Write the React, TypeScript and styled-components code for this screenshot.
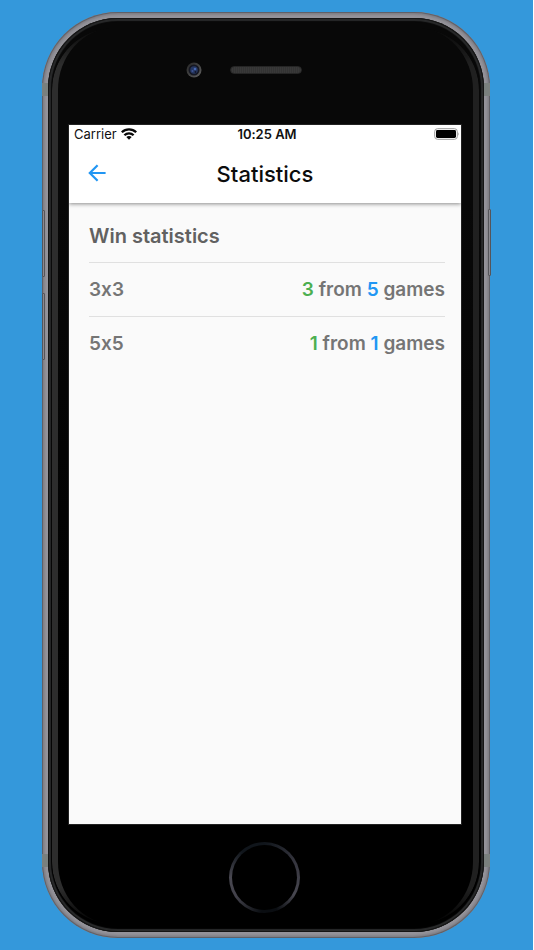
import React from "react";
import styled, { createGlobalStyle } from "styled-components";

const GlobalStyle = createGlobalStyle`
  *, *::before, *::after { box-sizing: border-box; }
  body {
    margin: 0;
    background: #3498db;
    font-family: Inter, "Liberation Sans", sans-serif;
    font-feature-settings: "calt" 0;
  }
`;

const Page = styled.main`
  display: flex;
  min-height: 100vh;
  padding: 12px 43px 12px 42px;
  border-right: 1px solid #ffffff;
  background: #3498db;
`;

const Phone = styled.div`
  position: relative;
  display: flex;
  flex: 1;
  padding: 6px;
  border-radius: 76px;
  background: #94939a;
  box-shadow:
    inset 0 0 1px 1px #5d5d63,
    inset 0 0 2px 3px #84838a;
`;

const Glass = styled.div`
  position: relative;
  display: flex;
  flex: 1;
  flex-direction: column;
  padding: 0 23px 0 21px;
  border-radius: 70px;
  background: linear-gradient(#080808, #080808 20%, #000000 75%);
  box-shadow:
    inset 0 0 0 1px #151515,
    inset 0 0 1px 3px #292a2b;

  &::before {
    content: "";
    position: absolute;
    inset: 10px 5px 8px 4px;
    border: 0 solid transparent;
    border-left: 6px solid #2d2d2d;
    border-right: 6px solid #202020;
    border-radius: 62px;
    mask-image: linear-gradient(transparent, #000000 36px, #000000 calc(100% - 36px), transparent);
    pointer-events: none;
  }
`;

const AntennaLine = styled.span<{ $side: "left" | "right"; $end: "top" | "bottom" }>`
  position: absolute;
  ${(p) => p.$side}: 0;
  ${(p) => p.$end}: 71px;
  width: 6px;
  height: 13px;
  background: #7a807e;
`;

const SideKey = styled.span<{ $side: "left" | "right"; $top: number }>`
  position: absolute;
  ${(p) => p.$side}: ${(p) => (p.$side === "left" ? 0 : -1)}px;
  top: ${(p) => p.$top}px;
  width: 3px;
  height: 67px;
  border: 1px solid #55555a;
  border-radius: 1px;
  background: #8b8a90;
`;

const TopBezel = styled.div`
  display: grid;
  grid-template-columns: 1fr auto 1fr;
  align-items: center;
  height: 107px;
  padding: 0 0 4px 2px;
`;

const Camera = styled.svg`
  justify-self: end;
  width: 16px;
  height: 16px;
  margin-right: 28px;
`;

const Speaker = styled.span`
  width: 72px;
  height: 8px;
  border: 1px solid #252525;
  border-radius: 4px;
  background: repeating-linear-gradient(90deg, #333333 0 1px, #393939 1px 2px);
`;

const Screen = styled.div`
  flex: 1;
  background: #fafafa;
  box-shadow: 0 0 0 1px #222222;
`;

const Header = styled.header`
  position: relative;
  background: #ffffff;
  box-shadow: 0 1px 4px rgba(0, 0, 0, 0.45);
  clip-path: inset(0 0 -8px 0);
`;

const StatusBar = styled.div`
  display: grid;
  grid-template-columns: 1fr auto 1fr;
  align-items: center;
  height: 18px;
  padding: 0 1px 0 5px;
  font-size: 13px;
  line-height: 16px;
  color: #111111;
`;

const Carrier = styled.span`
  display: flex;
  align-items: center;
  gap: 4px;
`;

const Clock = styled.time`
  font-weight: 600;
`;

const Battery = styled.svg`
  justify-self: end;
  width: 26px;
  height: 12px;
`;

const AppBar = styled.div`
  display: grid;
  grid-template-columns: 1fr auto 1fr;
  align-items: center;
  height: 60px;
  padding: 0 14px;
`;

const BackButton = styled.button`
  display: grid;
  place-items: center;
  width: 28px;
  height: 28px;
  padding: 0;
  border: 0;
  background: none;
  color: #2196f3;
  cursor: pointer;
`;

const Title = styled.h1`
  margin: 0;
  padding-top: 2px;
  font-size: 22px;
  font-weight: 500;
  line-height: 28px;
  color: #0c0c0c;
`;

const Stats = styled.table`
  width: calc(100% - 36px);
  margin: 5px 16px 0 20px;
  border-collapse: collapse;
  font-size: 19px;
  font-weight: 600;
  line-height: 24px;
  color: #757575;
`;

const Row = styled.tr`
  height: 54px;

  tbody > & {
    border-top: 1px solid #e0e0e0;
  }
`;

const Heading = styled.th`
  padding: 2px 0 0;
  font-size: 20px;
  font-weight: 600;
  text-align: left;
  color: #616161;
`;

const Board = styled.th`
  padding: 2px 0 0;
  font-weight: 600;
  text-align: left;
`;

const Result = styled.td`
  padding: 2px 0 0;
  text-align: right;
`;

const Count = styled.span<{ $kind: "won" | "played" }>`
  color: ${(p) => (p.$kind === "won" ? "#4caf50" : "#2196f3")};
`;

const BottomBezel = styled.div`
  display: grid;
  place-items: center;
  height: 108px;
  padding: 0 2px 2px 0;
`;

const HomeButton = styled.button`
  width: 71px;
  height: 71px;
  padding: 3px;
  border: 0;
  border-radius: 50%;
  background: conic-gradient(#10151b, #34343d 60deg, #484750 120deg, #0a0d11 160deg, #0a0d11 185deg, #42414a 235deg, #484750 270deg, #10151b 320deg);
  cursor: pointer;

  &::before {
    content: "";
    display: block;
    width: 100%;
    height: 100%;
    border-radius: 50%;
    background: #000000;
  }
`;

const results = [
  { board: "3x3", won: 3, played: 5 },
  { board: "5x5", won: 1, played: 1 },
];

export default function App() {
  return (
    <>
      <GlobalStyle />
      <Page>
        <Phone>
          <SideKey $side="left" $top={198} />
          <SideKey $side="left" $top={281} />
          <SideKey $side="right" $top={197} />
          <AntennaLine $side="left" $end="top" />
          <AntennaLine $side="right" $end="top" />
          <AntennaLine $side="left" $end="bottom" />
          <AntennaLine $side="right" $end="bottom" />
          <Glass>
            <TopBezel>
              <Camera viewBox="0 0 16 16" aria-hidden="true">
                <defs>
                  <linearGradient id="ring" x1="0" y1="0" x2="1" y2="1">
                    <stop offset="0" stopColor="#242424" />
                    <stop offset="1" stopColor="#626262" />
                  </linearGradient>
                </defs>
                <circle cx="8" cy="8" r="7.5" fill="url(#ring)" />
                <circle cx="8" cy="8" r="5.5" fill="#151722" />
                <circle cx="8" cy="8" r="3.8" fill="#263762" />
                <circle cx="9" cy="7" r="1.3" fill="#4667b2" />
                <circle cx="6.5" cy="9" r="1" fill="#3d5594" />
                <circle cx="9.5" cy="10" r="0.9" fill="#14182b" />
              </Camera>
              <Speaker />
            </TopBezel>
            <Screen>
              <Header>
                <StatusBar>
                  <Carrier>
                    Carrier
                    <svg width="16" height="12" viewBox="0 0 16 12" aria-label="Wi-Fi" role="img">
                      <g fill="none" stroke="#080808" strokeWidth="2.3">
                        <path d="M0.8 4.3C4.8 0.3 11.2 0.3 15.2 4.3" />
                        <path d="M3.4 7.3C6 4.7 10 4.7 12.6 7.3" />
                      </g>
                      <path d="M8 11.7L5.3 9Q8 6.8 10.7 9Z" fill="#080808" />
                    </svg>
                  </Carrier>
                  <Clock dateTime="10:25">10:25 AM</Clock>
                  <Battery viewBox="0 0 26 12" role="img" aria-label="Battery full">
                    <rect x="0.7" y="0.7" width="22.6" height="10.6" rx="2.8" fill="none" stroke="#999999" />
                    <rect x="2" y="2" width="20" height="8" rx="1.4" fill="#000000" />
                    <path d="M24.4 4.2Q25.6 6 24.4 7.8Z" fill="#888888" />
                  </Battery>
                </StatusBar>
                <AppBar>
                  <BackButton type="button" aria-label="Back">
                    <svg width="18" height="18" viewBox="0 0 18 18" fill="none" stroke="currentColor" strokeWidth="2.2">
                      <path d="M17.6 9H2M9.6 1.2L1.8 9L9.6 16.8" />
                    </svg>
                  </BackButton>
                  <Title>Statistics</Title>
                </AppBar>
              </Header>
              <Stats>
                <thead>
                  <Row>
                    <Heading colSpan={2}>Win statistics</Heading>
                  </Row>
                </thead>
                <tbody>
                  {results.map((r) => (
                    <Row key={r.board}>
                      <Board scope="row">{r.board}</Board>
                      <Result>
                        <Count $kind="won">{r.won}</Count> from <Count $kind="played">{r.played}</Count> games
                      </Result>
                    </Row>
                  ))}
                </tbody>
              </Stats>
            </Screen>
            <BottomBezel>
              <HomeButton type="button" aria-label="Home" />
            </BottomBezel>
          </Glass>
        </Phone>
      </Page>
    </>
  );
}
